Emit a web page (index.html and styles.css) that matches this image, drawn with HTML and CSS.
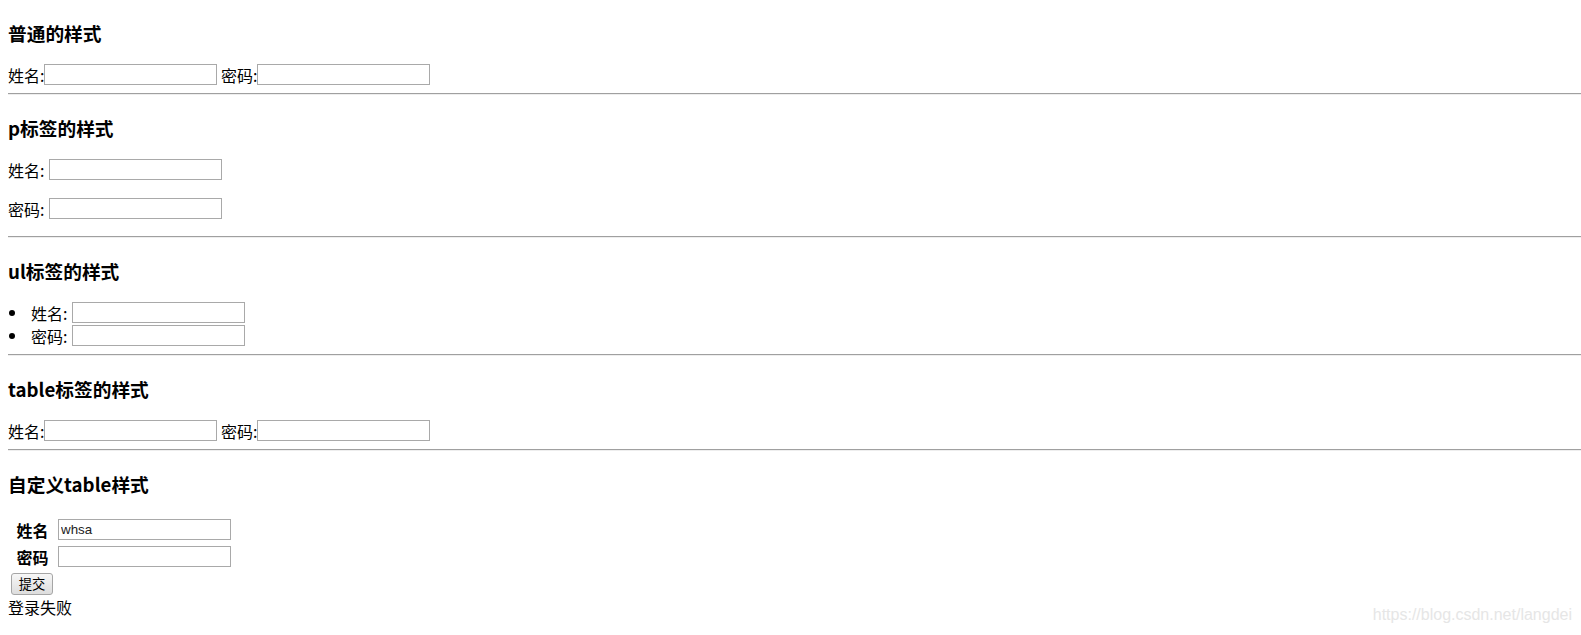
FILE: index.html
```html
<!DOCTYPE html>
<html>
<head>
    <meta charset="utf-8">
    <title>表单样式</title>
    <link rel="stylesheet" href="styles.css">
</head>
<body>
    <div class="section">
        <h3>普通的样式</h3>
        <div class="row">
            <span class="lbl">姓名:</span><input class="field" type="text">
            <span class="lbl next">密码:</span><input class="field" type="password">
        </div>
    </div>
    <hr>

    <div class="section">
        <h3>p标签的样式</h3>
        <p class="row"><span class="lbl">姓名:</span><input class="field spaced" type="text"></p>
        <p class="row"><span class="lbl">密码:</span><input class="field spaced" type="password"></p>
    </div>
    <hr>

    <div class="section">
        <h3>ul标签的样式</h3>
        <ul class="list">
            <li class="row"><span class="dot"></span><span class="lbl">姓名:</span><input class="field spaced" type="text"></li>
            <li class="row"><span class="dot"></span><span class="lbl">密码:</span><input class="field spaced" type="password"></li>
        </ul>
    </div>
    <hr>

    <div class="section">
        <h3>table标签的样式</h3>
        <div class="row">
            <span class="lbl">姓名:</span><input class="field" type="text">
            <span class="lbl next">密码:</span><input class="field" type="password">
        </div>
    </div>
    <hr>

    <div class="section">
        <h3 class="table-title">自定义table样式</h3>
        <table class="login">
            <tr>
                <th>姓名</th>
                <td><input class="field" type="text" value="whsa"></td>
            </tr>
            <tr>
                <th>密码</th>
                <td><input class="field" type="password"></td>
            </tr>
            <tr>
                <td><button class="submit">提交</button></td>
                <td></td>
            </tr>
        </table>
        <div class="message">登录失败</div>
    </div>

    <div class="watermark">https://blog.csdn.net/langdei</div>
</body>
</html>
```

FILE: styles.css
```css
/* 页面基础 */
body {
    margin: 0;
    padding: 22px 0 0 8px;
    font-family: "Noto Sans CJK SC", "Liberation Sans", sans-serif;
    font-size: 16px;
    color: #000;
}
h3 {
    margin: 0 0 19px;
    font-size: 18.72px;
    line-height: 22px;
    font-weight: bold;
}
hr {
    height: 0;
    margin: 7px 0 22px;
    border: 0;
    border-top: 1px solid #a0a0a0;
    border-bottom: 1px solid #eeeeee;
}

/* 表单行 */
.row {
    display: flex;
    align-items: center;
    height: 23px;
    margin: 0;
}
p.row {
    margin: 0 0 16px;
}
.lbl {
    width: 36px;
    line-height: 22px;
    white-space: nowrap;
}
.lbl.next {
    margin-left: 4px;
}
.field {
    box-sizing: border-box;
    width: 173px;
    height: 21px;
    margin: 0;
    padding: 1px 2px;
    border: 1px solid #a9a9a9;
    font-family: "Liberation Sans", sans-serif;
    font-size: 13.33px;
    color: #222;
    background: #fff;
}
.field.spaced {
    margin-left: 5px;
}

/* 列表 */
.list {
    margin: 0;
    padding: 0;
    list-style: none;
}
.dot {
    width: 6px;
    height: 6px;
    margin: 0 16px 0 1px;
    border-radius: 50%;
    background: #000;
}

/* 自定义表格 */
.table-title {
    margin-bottom: 20px;
}
.login {
    border-spacing: 2px;
    border-collapse: separate;
}
.login tr {
    height: 25px;
}
.login th,
.login td {
    padding: 1px;
    vertical-align: middle;
}
.login th {
    width: 43px;
    text-align: center;
    font-size: 16px;
    line-height: 22px;
}
.login .field {
    display: block;
}
.submit {
    display: block;
    box-sizing: border-box;
    width: 42px;
    height: 22px;
    padding: 0;
    border: 1px solid #a6a6a6;
    border-radius: 3px;
    background: linear-gradient(#f7f7f7, #dddddd);
    font-family: "Noto Sans CJK SC", sans-serif;
    font-size: 13.33px;
    color: #000;
}
.message {
    margin-top: -2px;
    line-height: 22px;
}

/* 水印 */
.watermark {
    position: absolute;
    top: 606px;
    right: 9px;
    font-family: "Liberation Sans", sans-serif;
    font-size: 16px;
    line-height: 18px;
    color: #e6e6e6;
}
```
